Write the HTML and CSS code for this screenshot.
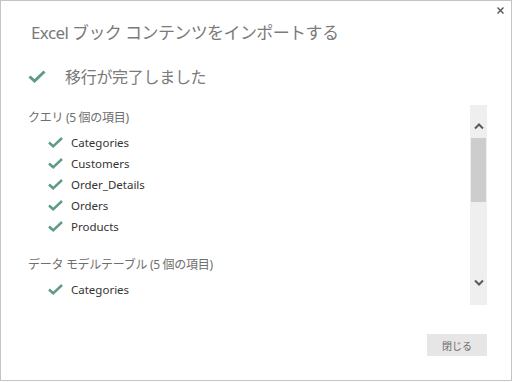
FILE: index.html
```html
<!DOCTYPE html>
<html lang="ja">
<head>
  <meta charset="UTF-8">
  <title>Excel ブック コンテンツをインポートする</title>
  <link rel="stylesheet" href="styles.css">
</head>
<body>
  <div class="dialog">
    <button class="close" aria-label="閉じる">
      <svg width="7" height="7" viewBox="0 0 7 7"><path d="M0.5 0.5L6.5 6.5M6.5 0.5L0.5 6.5" stroke="#555" stroke-width="1.4"/></svg>
    </button>
    <h1 class="title">Excel ブック コンテンツをインポートする</h1>
    <div class="status">
      <svg class="check big" width="18" height="13" viewBox="0 0 18 13"><path d="M1.5 6.5L6.5 11L16.5 1.5" fill="none" stroke="#5c9c87" stroke-width="3"/></svg>
      <span>移行が完了しました</span>
    </div>
    <div class="results">
      <div class="results-list">
        <div class="group">
          <div class="group-title">クエリ (5 個の項目)</div>
          <ul>
            <li><svg class="check" width="15" height="11" viewBox="0 0 15 11"><path d="M1 5.5L5.2 9.3L14 1" fill="none" stroke="#5c9c87" stroke-width="2.5"/></svg>Categories</li>
            <li><svg class="check" width="15" height="11" viewBox="0 0 15 11"><path d="M1 5.5L5.2 9.3L14 1" fill="none" stroke="#5c9c87" stroke-width="2.5"/></svg>Customers</li>
            <li><svg class="check" width="15" height="11" viewBox="0 0 15 11"><path d="M1 5.5L5.2 9.3L14 1" fill="none" stroke="#5c9c87" stroke-width="2.5"/></svg>Order_Details</li>
            <li><svg class="check" width="15" height="11" viewBox="0 0 15 11"><path d="M1 5.5L5.2 9.3L14 1" fill="none" stroke="#5c9c87" stroke-width="2.5"/></svg>Orders</li>
            <li><svg class="check" width="15" height="11" viewBox="0 0 15 11"><path d="M1 5.5L5.2 9.3L14 1" fill="none" stroke="#5c9c87" stroke-width="2.5"/></svg>Products</li>
          </ul>
        </div>
        <div class="group">
          <div class="group-title">データ モデルテーブル (5 個の項目)</div>
          <ul>
            <li><svg class="check" width="15" height="11" viewBox="0 0 15 11"><path d="M1 5.5L5.2 9.3L14 1" fill="none" stroke="#5c9c87" stroke-width="2.5"/></svg>Categories</li>
            <li><svg class="check" width="15" height="11" viewBox="0 0 15 11"><path d="M1 5.5L5.2 9.3L14 1" fill="none" stroke="#5c9c87" stroke-width="2.5"/></svg></li>
          </ul>
        </div>
      </div>
      <div class="scrollbar">
        <svg class="arrow" width="10" height="7" viewBox="0 0 10 7"><path d="M1 5.5L5 1.5L9 5.5" fill="none" stroke="#5a5a5a" stroke-width="2"/></svg>
        <div class="thumb"></div>
        <svg class="arrow down" width="10" height="7" viewBox="0 0 10 7"><path d="M1 1.5L5 5.5L9 1.5" fill="none" stroke="#5a5a5a" stroke-width="2"/></svg>
      </div>
    </div>
    <div class="footer">
      <button class="btn">閉じる</button>
    </div>
  </div>
</body>
</html>
```

FILE: styles.css
```css
body {
  margin: 0;
  background: #fff;
  font-family: "Noto Sans", "Noto Sans CJK JP", sans-serif;
}

.dialog {
  position: relative;
  box-sizing: border-box;
  width: 512px;
  height: 381px;
  border: 1px solid #c4c4c4;
  background: #fff;
  display: flex;
  flex-direction: column;
}

.close {
  position: absolute;
  top: 5px;
  right: 6px;
  width: 9px;
  height: 9px;
  padding: 1px;
  border: 0;
  background: none;
  line-height: 0;
}

.title {
  margin: 20px 0 0 30px;
  font-size: 17px;
  line-height: 24px;
  letter-spacing: -0.6px;
  font-weight: normal;
  color: #7a7a7a;
}

.status {
  display: flex;
  align-items: center;
  margin: 18px 0 0 27px;
  height: 26px;
  font-size: 16px;
  letter-spacing: -0.3px;
  color: #7a7a7a;
}

.status .check {
  margin-right: 19px;
}

.results {
  display: flex;
  margin: 16px 0 0 27px;
  height: 200px;
}

.results-list {
  flex: 1;
  overflow: hidden;
  padding-top: 3px;
}

.group + .group {
  margin-top: 18px;
}

.group-title {
  height: 20px;
  line-height: 20px;
  font-size: 12px;
  letter-spacing: -0.3px;
  color: #6e6e6e;
}

.group ul {
  list-style: none;
  margin: 4px 0 0;
  padding: 0 0 0 20px;
}

.group li {
  display: flex;
  align-items: center;
  height: 21px;
  font-size: 11.5px;
  color: #333;
}

.group li .check {
  margin-right: 8px;
}

.scrollbar {
  width: 17px;
  margin-right: 24px;
  background: #efefef;
  display: flex;
  flex-direction: column;
  align-items: center;
}

.scrollbar .arrow {
  margin-top: 18px;
}

.scrollbar .thumb {
  width: 15px;
  height: 64px;
  margin-top: 8px;
  background: #cdcdcd;
}

.scrollbar .arrow.down {
  margin-top: auto;
  margin-bottom: 19px;
}

.footer {
  display: flex;
  justify-content: flex-end;
  margin: 29px 24px 0 0;
}

.btn {
  width: 60px;
  height: 22px;
  border: 0;
  background: #e6e6e6;
  color: #6a6a6a;
  font-family: "Noto Sans CJK JP", sans-serif;
  font-size: 10px;
}
```
